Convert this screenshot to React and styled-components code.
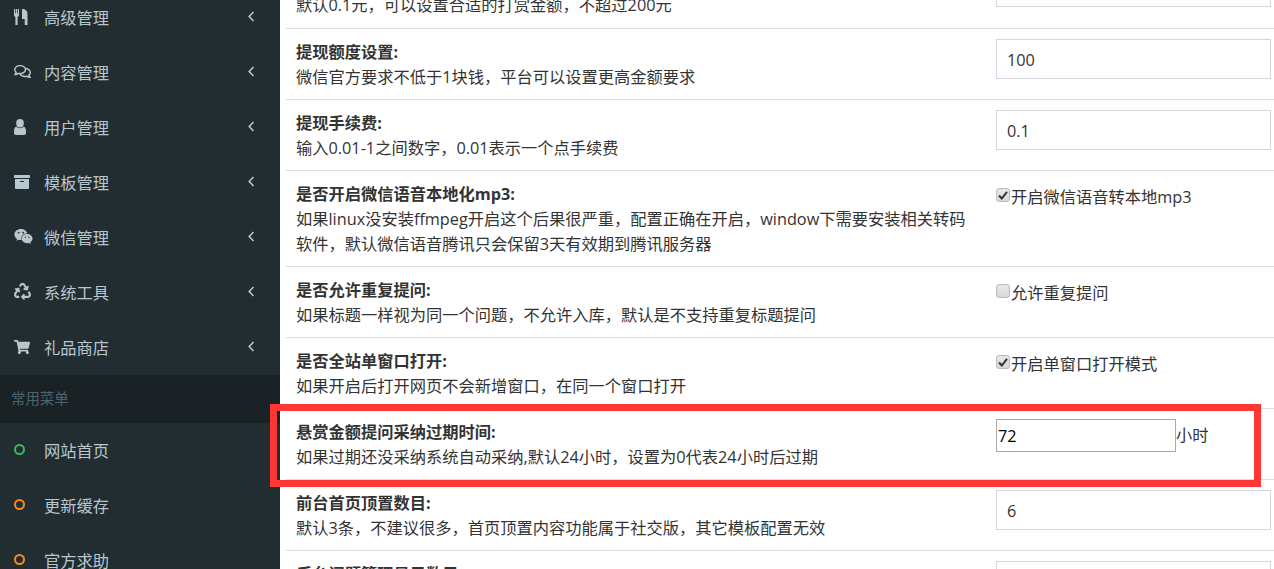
import React from 'react';
import styled, { createGlobalStyle } from 'styled-components';
import { FaRegComments, FaArchive, FaWeixin, FaRecycle, FaShoppingCart } from 'react-icons/fa';

const Global = createGlobalStyle`
  html, body { margin: 0; padding: 0; height: 569px; overflow: hidden; background: #fff; }
  body { font-family: "Open Sans", "Noto Sans CJK SC", sans-serif; font-size: 16.25px; color: #333; }
  * { box-sizing: border-box; }
`;
const Page = styled.div`
  position: relative; display: flex; width: 1274px; height: 569px; overflow: hidden;
`;
const Sidebar = styled.aside`
  flex: 0 0 280px; background: #222d32; margin-top: -10px; height: 579px;
`;
const MenuItem = styled.div`
  display: flex; align-items: center; height: 55px; padding: 0 0 2px 14px; color: #b8c7ce;
`;
const IconSlot = styled.span`
  flex: 0 0 30px; display: flex; align-items: center; color: #b8c7ce; font-size: ${p => p.$size || 16}px;
`;
const Label = styled.span`flex: 1;`;
const ChevronIcon = styled.svg`
  width: 7px; height: 11px; margin-right: 25px; margin-top: -1px; fill: none; stroke: #b8c7ce; stroke-width: 1.6;
`;
const GlyphIcon = styled.svg`
  width: ${p => p.$w}px; height: 16px; fill: #b8c7ce;
`;
const Ring = styled.span`
  width: 11px; height: 11px; border-radius: 50%;
  border: 2px solid ${p => p.$color};
`;
const MenuHeader = styled.div`
  height: 48px; background: #1a2226; color: #4b646f; font-size: 14.4px; padding: 0 11px 4px;
  display: flex; align-items: center;
`;
const Main = styled.main`
  flex: 1; min-width: 0; margin-top: -43px; padding-left: 6px;
`;
const Row = styled.section`
  display: grid; grid-template-columns: 700px 275px; column-gap: 0;
  padding: 11px 0 9px 10px; border-bottom: 1px solid #ddd; line-height: 25px; height: ${p => p.$h}px;
`;
const Title = styled.div`font-weight: 700;`;
const Desc = styled.div`width: 680px;`;
const Control = styled.div`display: flex; align-items: flex-start; margin-top: -1px;`;
const TextInput = styled.input`
  width: 275px; height: 40px; border: 1px solid #d2d6de; padding: 2px 10px 0; font: inherit; color: #333; outline: none; background: #fff;
`;
const ShortInput = styled.input`
  width: 180px; height: 33px; border: 1px solid #a9a9a9; padding: 0 1px; font: inherit; color: #000; outline: none; background: #fff;
`;
const Unit = styled.span`line-height: 33px; color: #333;`;
const CheckLabel = styled.label`display: flex; align-items: center; height: 25px; margin-top: 4px;`;
const CheckBox = styled.span`
  width: 14px; height: 14px; border: 1px solid #bdbdbd; border-radius: 3px; margin: -5px 1px 0 0;
  background: linear-gradient(#e8e8e8, #d8d8d8); display: flex; align-items: center; justify-content: center;
`;
const Highlight = styled.div`
  position: absolute; left: 270px; top: 404px; width: 991px; height: 83px; border: 7px solid #ff3636; pointer-events: none;
`;

const Cutlery = () => (
  <GlyphIcon $w={14} viewBox="0 0 14 16">
    <path d="M0 0h1.200v4.500h.7V0h1.200v4.500h.7V0h1.200v6c0 1-.6 1.600-1.400 1.900V16H1.400V7.900C.6 7.600 0 7 0 6z" />
    <path d="M8 0C11.500 0 13.500 2 13.500 5v11h-2.800v-6H8z" />
  </GlyphIcon>
);
const Bust = () => (
  <GlyphIcon $w={12} viewBox="0 0 12 16">
    <ellipse cx="6" cy="4.200" rx="3.800" ry="4.200" />
    <path d="M2.200 7.600C3.200 8.700 4.500 9.200 6 9.200s2.800-.5 3.800-1.600C11.300 8.200 12 10 12 12.600V14c0 1.200-.8 2-2 2H2c-1.200 0-2-.8-2-2v-1.400C0 10 .7 8.200 2.200 7.600z" />
  </GlyphIcon>
);

const menu = [
  ['高级管理', <Cutlery />, 16], ['内容管理', <FaRegComments />, 17], ['用户管理', <Bust />, 16],
  ['模板管理', <FaArchive />, 16], ['微信管理', <FaWeixin />, 19], ['系统工具', <FaRecycle />, 17], ['礼品商店', <FaShoppingCart />, 16],
];
const quick = [['网站首页', '#3cb95a'], ['更新缓存', '#f28c1e'], ['官方求助', '#f28c1e']];

const Chevron = () => <ChevronIcon viewBox="0 0 7 11"><path d="M5.500 1 1.200 5.500 5.500 10" /></ChevronIcon>;

const Check = ({ on, text }) => (
  <CheckLabel>
    <CheckBox>{on && <svg width="10" height="10" viewBox="0 0 10 10"><path d="M1 5.500 3.800 8.500 9 1.800" fill="none" stroke="#333" strokeWidth="2" /></svg>}</CheckBox>
    {text}
  </CheckLabel>
);

const rows = [
  { h: 72, t: '打赏金额设置:', d: '默认0.1元，可以设置合适的打赏金额，不超过200元', c: <TextInput defaultValue="" /> },
  { h: 71, t: '提现额度设置:', d: '微信官方要求不低于1块钱，平台可以设置更高金额要求', c: <TextInput defaultValue="100" /> },
  { h: 71, t: '提现手续费:', d: '输入0.01-1之间数字，0.01表示一个点手续费', c: <TextInput defaultValue="0.1" /> },
  { h: 96, t: '是否开启微信语音本地化mp3:', d: '如果linux没安装ffmpeg开启这个后果很严重，配置正确在开启，window下需要安装相关转码软件，默认微信语音腾讯只会保留3天有效期到腾讯服务器', c: <Check on text="开启微信语音转本地mp3" /> },
  { h: 71, t: '是否允许重复提问:', d: '如果标题一样视为同一个问题，不允许入库，默认是不支持重复标题提问', c: <Check text="允许重复提问" /> },
  { h: 71, t: '是否全站单窗口打开:', d: '如果开启后打开网页不会新增窗口，在同一个窗口打开', c: <Check on text="开启单窗口打开模式" /> },
  { h: 71, t: '悬赏金额提问采纳过期时间:', d: '如果过期还没采纳系统自动采纳,默认24小时，设置为0代表24小时后过期', c: <><ShortInput defaultValue="72" /><Unit>小时</Unit></> },
  { h: 71, t: '前台首页顶置数目:', d: '默认3条，不建议很多，首页顶置内容功能属于社交版，其它模板配置无效', c: <TextInput defaultValue="6" /> },
  { h: 71, t: '后台问题管理显示数目:', d: '', c: <TextInput defaultValue="" /> },
];

export default function App() {
  return (
    <Page>
      <Global />
      <Sidebar>
        {menu.map(([label, icon, size]) => (
          <MenuItem key={label}><IconSlot $size={size}>{icon}</IconSlot><Label>{label}</Label><Chevron /></MenuItem>
        ))}
        <MenuHeader>常用菜单</MenuHeader>
        {quick.map(([label, color]) => (
          <MenuItem key={label}><IconSlot><Ring $color={color} /></IconSlot><Label>{label}</Label></MenuItem>
        ))}
      </Sidebar>
      <Main>
        {rows.map(r => (
          <Row key={r.t} $h={r.h}>
            <div><Title>{r.t}</Title><Desc>{r.d}</Desc></div>
            <Control>{r.c}</Control>
          </Row>
        ))}
      </Main>
      <Highlight />
    </Page>
  );
}
